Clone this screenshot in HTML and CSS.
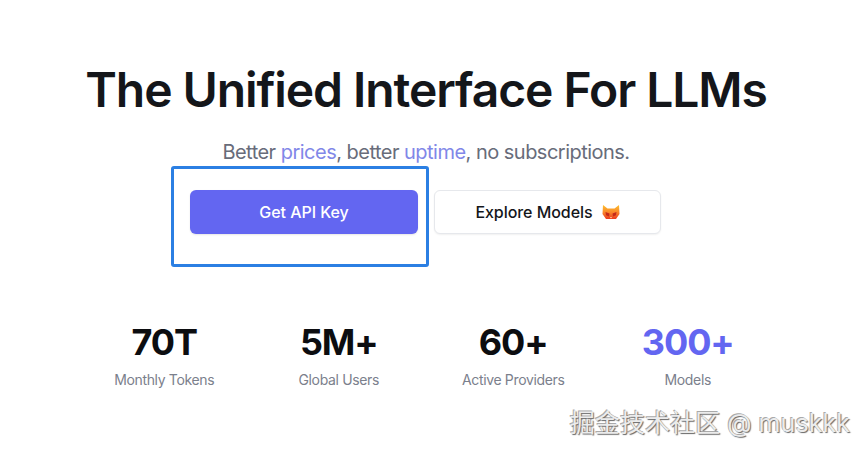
FILE: index.html
```html
<!DOCTYPE html>
<html lang="en">
<head>
  <meta charset="UTF-8" />
  <meta name="viewport" content="width=device-width, initial-scale=1.0"/>
  <title>OpenRouter</title>
  <link rel="stylesheet" href="styles.css">
</head>
<body>
  <main class="hero">
    <h1 class="hero-title">The Unified Interface For LLMs</h1>
    <p class="hero-sub">Better <a href="#">prices</a>, better <a href="#">uptime</a>, no subscriptions.</p>

    <div class="hero-actions">
      <div class="action-wrap">
        <button class="btn btn-primary" type="button">Get API Key</button>
        <div class="highlight-box"></div>
      </div>
      <button class="btn btn-outline" type="button">
        Explore Models
        <svg class="btn-icon" viewBox="0 0 18 16" aria-hidden="true">
          <defs>
            <linearGradient id="fox" x1="0" y1="0" x2="0" y2="1">
              <stop offset="0" stop-color="#fdc22e"/>
              <stop offset="0.55" stop-color="#f9822a"/>
              <stop offset="1" stop-color="#ea3a1e"/>
            </linearGradient>
          </defs>
          <path d="M1 1l4.500 3.500h7L17 1l.5 9-3.500 5H4L.5 10z" fill="url(#fox)"/>
          <path d="M3.500 8l4 1.500-.5 3-3-1.200zM14.500 8l-4 1.500.5 3 3-1.200z" fill="#c42a1a"/>
          <path d="M8 13h2l-1 1.500z" fill="#fde3b0"/>
        </svg>
      </button>
    </div>

    <section class="stats">
      <div class="stat">
        <div class="stat-value">70T</div>
        <div class="stat-label">Monthly Tokens</div>
      </div>
      <div class="stat">
        <div class="stat-value">5M+</div>
        <div class="stat-label">Global Users</div>
      </div>
      <div class="stat">
        <div class="stat-value">60+</div>
        <div class="stat-label">Active Providers</div>
      </div>
      <div class="stat">
        <div class="stat-value stat-accent">300+</div>
        <div class="stat-label">Models</div>
      </div>
    </section>
  </main>

  <div class="watermark">掘金技术社区 @ muskkk</div>
</body>
</html>
```

FILE: styles.css
```css
html, body {
  height: 100%;
  margin: 0;
  padding: 0;
}

body {
  background-color: #fff;
  font-family: Inter, "Noto Sans CJK SC", sans-serif;
  color: #111318;
  overflow: hidden;
}

.hero {
  width: 852px;
  padding-top: 61px;
  display: flex;
  flex-direction: column;
  align-items: center;
}

.hero-title {
  margin: 0;
  font-size: 48px;
  line-height: 58px;
  font-weight: 600;
  letter-spacing: -1.08px;
  color: #14161a;
}

.hero-sub {
  margin: 17px 0 0;
  font-size: 20px;
  line-height: 32px;
  letter-spacing: -0.52px;
  color: #686c7a;
}

.hero-sub a {
  color: #8187e8;
  text-decoration: none;
}

.hero-actions {
  display: flex;
  gap: 16px;
  margin: 22px 1px 0 0;
}

.action-wrap {
  position: relative;
}

.btn {
  display: flex;
  align-items: center;
  justify-content: center;
  width: 228px;
  height: 44px;
  border-radius: 6px;
  font-family: inherit;
  font-size: 16px;
  font-weight: 500;
  letter-spacing: -0.05px;
  cursor: pointer;
}

.btn-primary {
  background-color: #6366f1;
  border: none;
  color: #fff;
  box-shadow: 0 1px 2px rgba(0, 0, 0, 0.1);
}

.btn-outline {
  width: 227px;
  background-color: #fff;
  border: 1px solid #e6e8ec;
  color: #14161a;
  box-shadow: 0 1px 2px rgba(0, 0, 0, 0.06);
}

.btn-icon {
  width: 18px;
  height: 16px;
  margin-left: 9px;
}

.highlight-box {
  position: absolute;
  left: -19px;
  top: -24px;
  width: 258px;
  height: 101px;
  box-sizing: border-box;
  border: 3px solid #2b7fe3;
  border-radius: 3px;
}

.stats {
  display: grid;
  grid-template-columns: repeat(4, 174.500px);
  margin-top: 86px;
  text-align: center;
}

.stat-value {
  font-size: 36px;
  line-height: 44px;
  font-weight: 700;
  letter-spacing: -1.1px;
  color: #0c0d10;
}

.stat-accent {
  color: #6366f1;
}

.stat-label {
  margin-top: 6px;
  font-size: 14px;
  line-height: 20px;
  letter-spacing: -0.35px;
  color: #7b808c;
}

.watermark {
  position: absolute;
  right: 14px;
  top: 407px;
  font-size: 25.100px;
  line-height: 32px;
  white-space: nowrap;
  color: #ececec;
  text-shadow: 1px 1px 1px #666, -1px -1px 0 #aaa;
}
```
